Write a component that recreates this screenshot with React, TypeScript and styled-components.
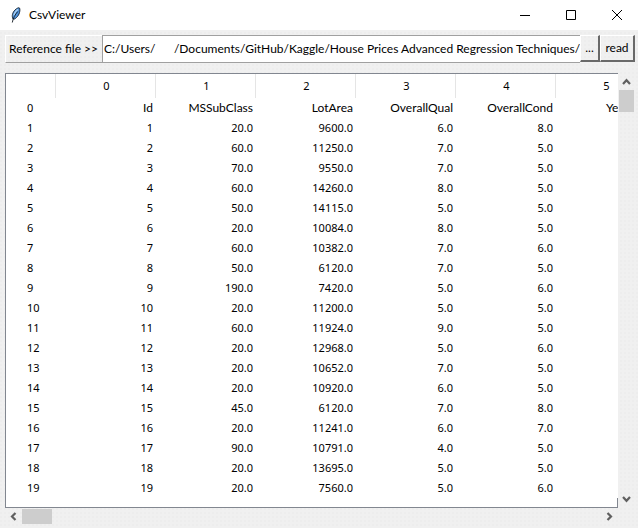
import React from "react";
import styled, { createGlobalStyle } from "styled-components";

const textFont = `"Lato", "Open Sans", sans-serif`;

const GlobalStyle = createGlobalStyle`
  * { box-sizing: border-box; }
  body { margin: 0; }
  body, button, input, table {
    font-family: "Noto Sans", "Open Sans", sans-serif;
    font-size: 11px;
    line-height: 16px;
    color: #000;
  }
  button { padding: 0; border: 0; background: none; }
`;

const Window = styled.div`
  display: flex;
  flex-direction: column;
  height: 100vh;
  overflow: hidden;
  background-color: #f0f0f0;
  background-image: radial-gradient(circle at 1px 1px, #ededed 1px, transparent 1px);
  background-size: 4px 4px;
`;

const TitleBar = styled.header`
  display: flex;
  align-items: center;
  flex: none;
  gap: 4px;
  height: 30px;
  padding-left: 8px;
  background: #fff;
`;

const Title = styled.h1`
  flex: 1;
  margin: 0;
  padding-left: 1px;
  font-family: ${textFont};
  font-size: 12px;
  font-weight: 400;
`;

const CaptionButton = styled.button`
  display: flex;
  align-items: center;
  justify-content: center;
  width: 42px;
  height: 30px;
`;

const Toolbar = styled.div`
  display: flex;
  flex: none;
  height: 28px;
  margin: 5px 3px 10px 5px;
`;

const PathLabel = styled.label`
  display: flex;
  align-items: center;
  flex: none;
  width: 97px;
  padding-left: 3px;
  border: 1px solid #fff;
  border-right: 0;
  border-bottom-color: #a0a0a0;
  font-family: ${textFont};
  font-size: 12px;
  white-space: nowrap;
`;

const PathInput = styled.input`
  flex: 1;
  min-width: 0;
  padding: 0 0 0 1px;
  border: 1px solid #a0a0a0;
  border-right: 0;
  border-radius: 0;
  outline: 0;
  background: #fff;
  font-family: ${textFont};
  font-size: 12px;
`;

const RaisedButton = styled.button<{ $width: number }>`
  flex: none;
  width: ${(p) => p.$width}px;
  height: 27px;
  border: 1px solid #fff;
  border-right: 2px solid #696969;
  border-bottom: 2px solid #696969;
  font-family: ${textFont};
  font-size: 12px;
`;

const Viewer = styled.main`
  display: grid;
  grid-template-columns: minmax(0, 1fr) 15px;
  grid-template-rows: minmax(0, 1fr) 15px;
  gap: 1px;
  flex: 1;
  min-height: 0;
  padding: 0 4px 4px 5px;
`;

const Frame = styled.div`
  position: relative;
  overflow: hidden;
  border: 1px solid #828790;
  border-right: 0;
  background: #fff;

  &::after {
    content: "";
    position: absolute;
    right: 0;
    bottom: 0;
    height: 9px;
    border-right: 1px solid #828790;
  }
`;

const DataTable = styled.table`
  width: 650px;
  table-layout: fixed;
  border-collapse: separate;
  border-spacing: 0;
`;

const IndexCol = styled.col`
  width: 50px;
`;

const HeadCell = styled.th`
  height: 24px;
  padding: 0 0 0 2px;
  border-right: 1px solid #e5e5e5;
  font-weight: 400;
  text-align: center;
`;

const RowHead = styled.th`
  height: 20px;
  padding: 0 0 0 21px;
  font-weight: 400;
  text-align: left;
`;

const Cell = styled.td<{ $name: boolean }>`
  height: 20px;
  padding: 0 3px 0 0;
  text-align: right;
  font-family: ${(p) => (p.$name ? textFont : "inherit")};
  font-size: ${(p) => (p.$name ? 12 : 11)}px;
  white-space: nowrap;
`;

const ScrollBar = styled.div<{ $vertical?: boolean }>`
  display: flex;
  flex-direction: ${(p) => (p.$vertical ? "column" : "row")};
`;

const ScrollButton = styled.button`
  display: flex;
  flex: 0 0 17px;
  align-items: center;
  justify-content: center;
`;

const Track = styled.div<{ $vertical?: boolean }>`
  display: flex;
  flex: 1;
  flex-direction: ${(p) => (p.$vertical ? "column" : "row")};
`;

const Thumb = styled.div<{ $length: number; $vertical?: boolean }>`
  width: ${(p) => (p.$vertical ? 15 : p.$length)}px;
  height: ${(p) => (p.$vertical ? p.$length : 15)}px;
  background: #cdcdcd;
`;

const arrows = {
  up: "M1 7 4.5 3.2 8 7",
  down: "M1 2 4.5 5.8 8 2",
  left: "M6.5 1 3 4.5 6.5 8",
  right: "M2.5 1 6 4.5 2.5 8",
};

function Arrow({ dir }: { dir: keyof typeof arrows }) {
  return (
    <ScrollButton aria-label={`Scroll ${dir}`}>
      <svg width="9" height="9" viewBox="0 0 9 9" fill="none" stroke="#606060" strokeWidth="2.2">
        <path d={arrows[dir]} />
      </svg>
    </ScrollButton>
  );
}

function Feather() {
  return (
    <svg width="16" height="16" viewBox="0 0 16 16">
      <path d="M5 12C3.5 9 4.5 5.5 7 3 9 1 11 .3 11.5 1 12.5 3 11.5 8 8.5 10.5 7.5 11.5 6.5 12.5 5 12Z" fill="#4f93dc" stroke="#14202e" strokeWidth=".9" />
      <path d="M6 8.5C6.5 6 8 3.5 10 2.3" fill="none" stroke="#a5cdf2" strokeWidth="1.5" />
      <path d="M4.3 15.5C5 11.5 7 7.5 9.8 4.5" fill="none" stroke="#101820" strokeWidth=".9" />
    </svg>
  );
}

const lotData: [string, string, string, string][] = [
  ["20.0", "9600.0", "6.0", "8.0"],
  ["60.0", "11250.0", "7.0", "5.0"],
  ["70.0", "9550.0", "7.0", "5.0"],
  ["60.0", "14260.0", "8.0", "5.0"],
  ["50.0", "14115.0", "5.0", "5.0"],
  ["20.0", "10084.0", "8.0", "5.0"],
  ["60.0", "10382.0", "7.0", "6.0"],
  ["50.0", "6120.0", "7.0", "5.0"],
  ["190.0", "7420.0", "5.0", "6.0"],
  ["20.0", "11200.0", "5.0", "5.0"],
  ["60.0", "11924.0", "9.0", "5.0"],
  ["20.0", "12968.0", "5.0", "6.0"],
  ["20.0", "10652.0", "7.0", "5.0"],
  ["20.0", "10920.0", "6.0", "5.0"],
  ["45.0", "6120.0", "7.0", "8.0"],
  ["20.0", "11241.0", "6.0", "7.0"],
  ["90.0", "10791.0", "4.0", "5.0"],
  ["20.0", "13695.0", "5.0", "5.0"],
  ["20.0", "7560.0", "5.0", "6.0"],
];

const rows: string[][] = [
  ["Id", "MSSubClass", "LotArea", "OverallQual", "OverallCond", "YearBuilt"],
  ...lotData.map((values, i) => [String(i + 1), ...values, ""]),
];

const filePath =
  "C:/Users/" + " ".repeat(6) +
  "/Documents/GitHub/Kaggle/House Prices Advanced Regression Techniques/";

export default function App() {
  return (
    <>
      <GlobalStyle />
      <Window>
        <TitleBar>
          <Feather />
          <Title>CsvViewer</Title>
          <CaptionButton aria-label="Minimize">
            <svg width="10" height="10" stroke="#000"><path d="M0 5.5H10" /></svg>
          </CaptionButton>
          <CaptionButton aria-label="Maximize">
            <svg width="10" height="10" fill="none" stroke="#000"><path d="M.5.5H9.5V9.5H.5Z" /></svg>
          </CaptionButton>
          <CaptionButton aria-label="Close">
            <svg width="10" height="10" stroke="#000"><path d="M0 0 10 10M10 0 0 10" /></svg>
          </CaptionButton>
        </TitleBar>
        <Toolbar>
          <PathLabel htmlFor="path">Reference file &gt;&gt;</PathLabel>
          <PathInput id="path" defaultValue={filePath} />
          <RaisedButton $width={20}>...</RaisedButton>
          <RaisedButton $width={35}>read</RaisedButton>
        </Toolbar>
        <Viewer>
          <Frame>
            <DataTable>
              <colgroup>
                <IndexCol />
                <col span={6} />
              </colgroup>
              <thead>
                <tr>
                  <HeadCell />
                  {rows[0].map((_, i) => <HeadCell key={i} scope="col">{i}</HeadCell>)}
                </tr>
              </thead>
              <tbody>
                {rows.map((row, r) => (
                  <tr key={r}>
                    <RowHead scope="row">{r}</RowHead>
                    {row.map((value, c) => <Cell key={c} $name={r === 0}>{value}</Cell>)}
                  </tr>
                ))}
              </tbody>
            </DataTable>
          </Frame>
          <ScrollBar $vertical>
            <Arrow dir="up" />
            <Track $vertical><Thumb $vertical $length={22} /></Track>
            <Arrow dir="down" />
          </ScrollBar>
          <ScrollBar>
            <Arrow dir="left" />
            <Track><Thumb $length={30} /></Track>
            <Arrow dir="right" />
          </ScrollBar>
        </Viewer>
      </Window>
    </>
  );
}
